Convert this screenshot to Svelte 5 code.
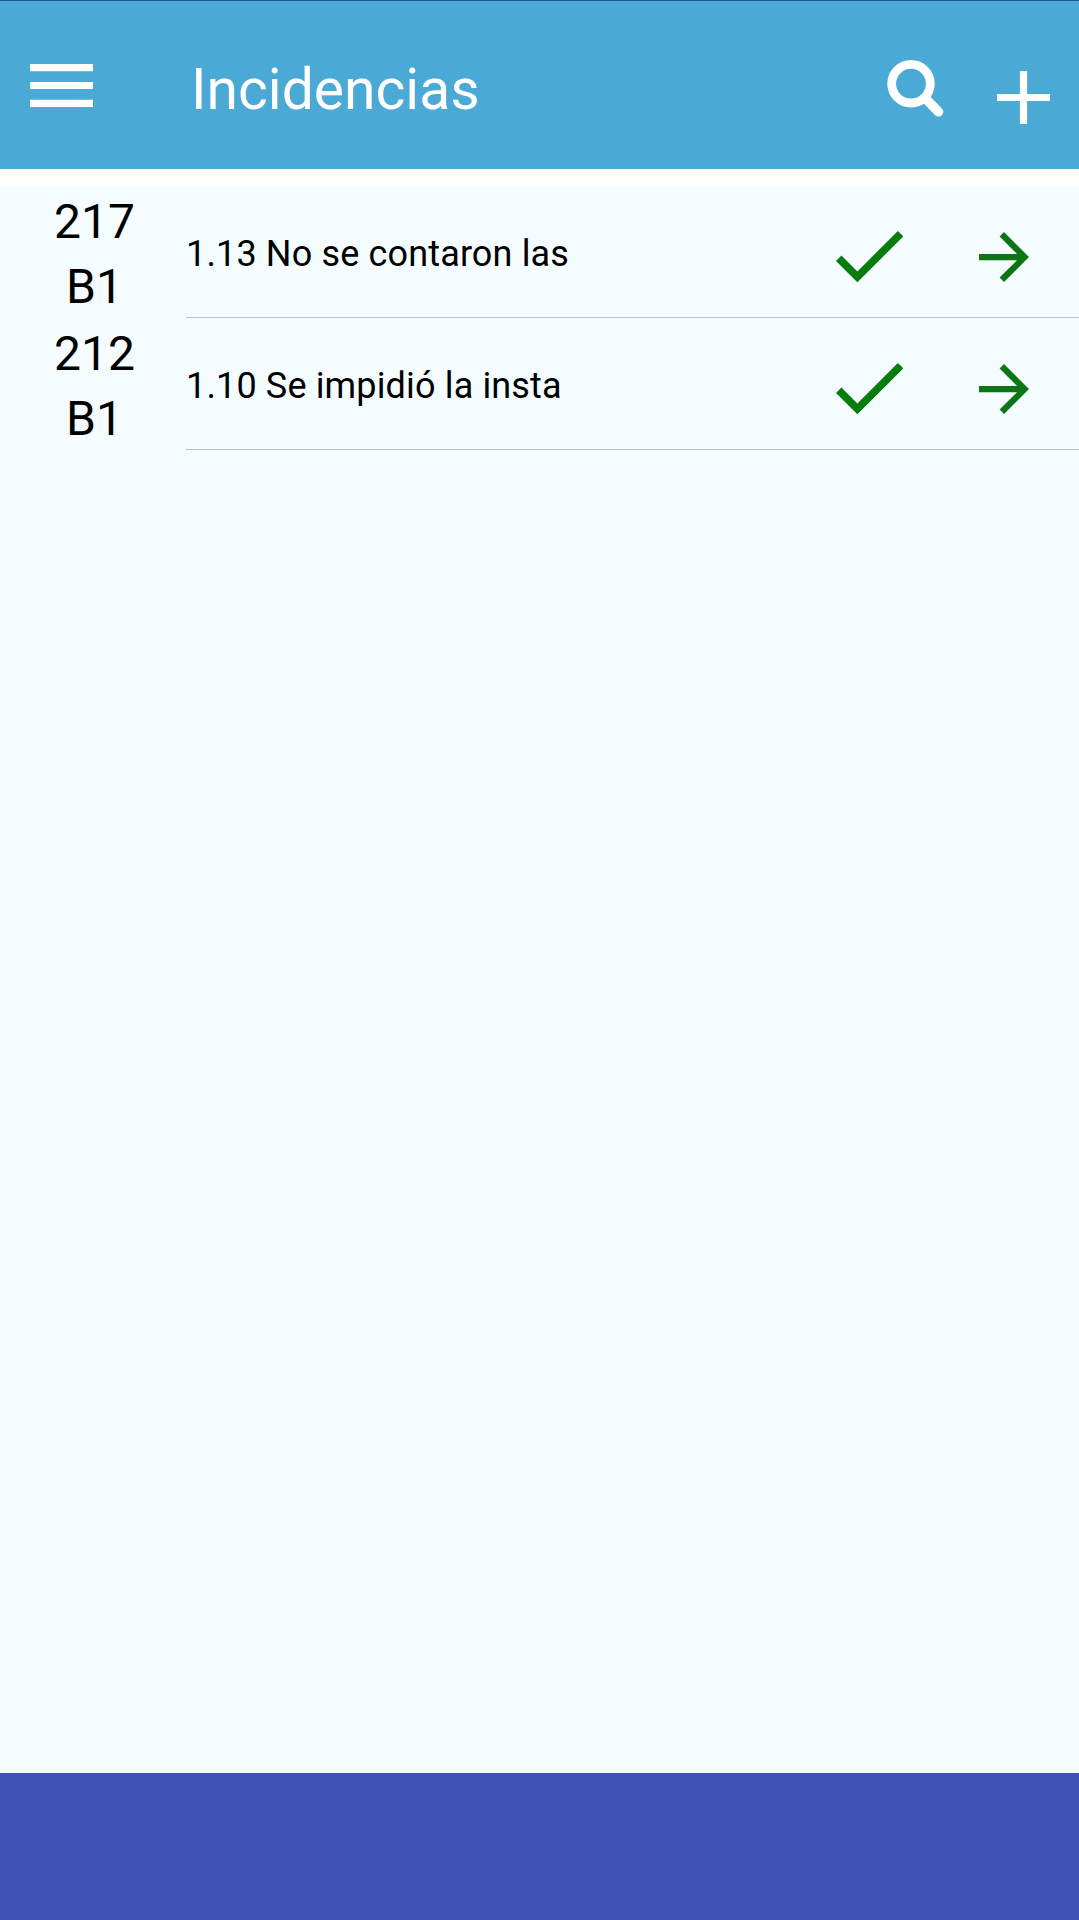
<script>
  const incidents = [
    { section: '217', booth: 'B1', text: '1.13 No se contaron las' },
    { section: '212', booth: 'B1', text: '1.10 Se impidió la insta' }
  ];
</script>

<div class="screen">
  <header class="bar">
    <button class="menu" aria-label="Menú">
      <svg viewBox="3 6 18 12" width="63" height="43" preserveAspectRatio="none">
        <path d="M3 18h18v-2H3v2zm0-5h18v-2H3v2zm0-7v2h18V6H3z" />
      </svg>
    </button>
    <h1>Incidencias</h1>
    <button class="search" aria-label="Buscar">
      <svg viewBox="0 0 57 57" width="57" height="57">
        <circle cx="24" cy="23.7" r="19.3" fill="none" stroke="#fff" stroke-width="8.8" />
        <path d="M39 39L51.5 51.8" fill="none" stroke="#fff" stroke-width="9.6" stroke-linecap="round" />
      </svg>
    </button>
    <button class="add" aria-label="Agregar">
      <svg viewBox="5 5 14 14" width="53" height="53">
        <path d="M19 12.95h-6.05V19h-1.9v-6.05H5v-1.9h6.05V5h1.9v6.05H19z" />
      </svg>
    </button>
  </header>

  <main>
    <ul>
      {#each incidents as item}
        <li>
          <div class="code"><span>{item.section}</span><span>{item.booth}</span></div>
          <div class="content">
            <span class="text">{item.text}</span>
            <svg class="check" viewBox="3.41 5.59 17.59 13.41" width="67.3" height="51.3">
              <path d="M9 16.17L4.83 12l-1.42 1.41L9 19 21 7l-1.41-1.41z" />
            </svg>
            <svg class="arrow" viewBox="4 4 16 16" width="50" height="50">
              <path d="M12 4l-1.41 1.41L16.17 11H4v2h12.17l-5.58 5.59L12 20l8-8z" />
            </svg>
          </div>
        </li>
      {/each}
    </ul>
  </main>

  <footer></footer>
</div>

<style>
  :global(body) {
    margin: 0;
    background: #fff;
  }
  .screen {
    display: flex;
    flex-direction: column;
    height: 1920px;
    font-family: Roboto, sans-serif;
    color: #000;
  }
  .bar {
    box-sizing: border-box;
    height: 169px;
    border-top: 1px solid #1d5394;
    background: #4aa9d5;
    display: flex;
    align-items: flex-start;
    padding: 0 29px 0 30px;
  }
  button {
    border: 0;
    background: none;
    padding: 0;
    display: flex;
  }
  svg {
    display: block;
    fill: #fff;
    flex: none;
  }
  .menu {
    margin-top: 63px;
  }
  h1 {
    flex: 1;
    margin: 55px 0 0 98px;
    font-size: 57px;
    line-height: 68px;
    font-weight: 400;
    color: #fff;
  }
  .search {
    margin-top: 59px;
  }
  .add {
    margin: 70px 0 0 53px;
  }
  main {
    flex: 1;
    margin-top: 17px;
    background: #f5fcff;
  }
  ul {
    list-style: none;
    margin: 0;
    padding: 0;
  }
  li {
    display: flex;
    height: 132px;
  }
  .code {
    width: 186px;
    padding: 3px 0 0 3px;
    box-sizing: border-box;
    display: flex;
    flex-direction: column;
    align-items: center;
    font-size: 48px;
    line-height: 65px;
  }
  .content {
    flex: 1;
    box-sizing: border-box;
    border-bottom: 1px solid #bcc4c9;
    display: flex;
    align-items: flex-start;
    padding-right: 50px;
  }
  .text {
    flex: 1;
    margin-top: 47px;
    font-size: 36px;
    line-height: 43px;
    letter-spacing: 0.15px;
  }
  .check {
    margin-top: 45px;
    fill: #067c0b;
  }
  .arrow {
    margin: 46px 0 0 75.7px;
    fill: #0b7613;
  }
  footer {
    height: 147px;
    background: #3f51b5;
  }
</style>
